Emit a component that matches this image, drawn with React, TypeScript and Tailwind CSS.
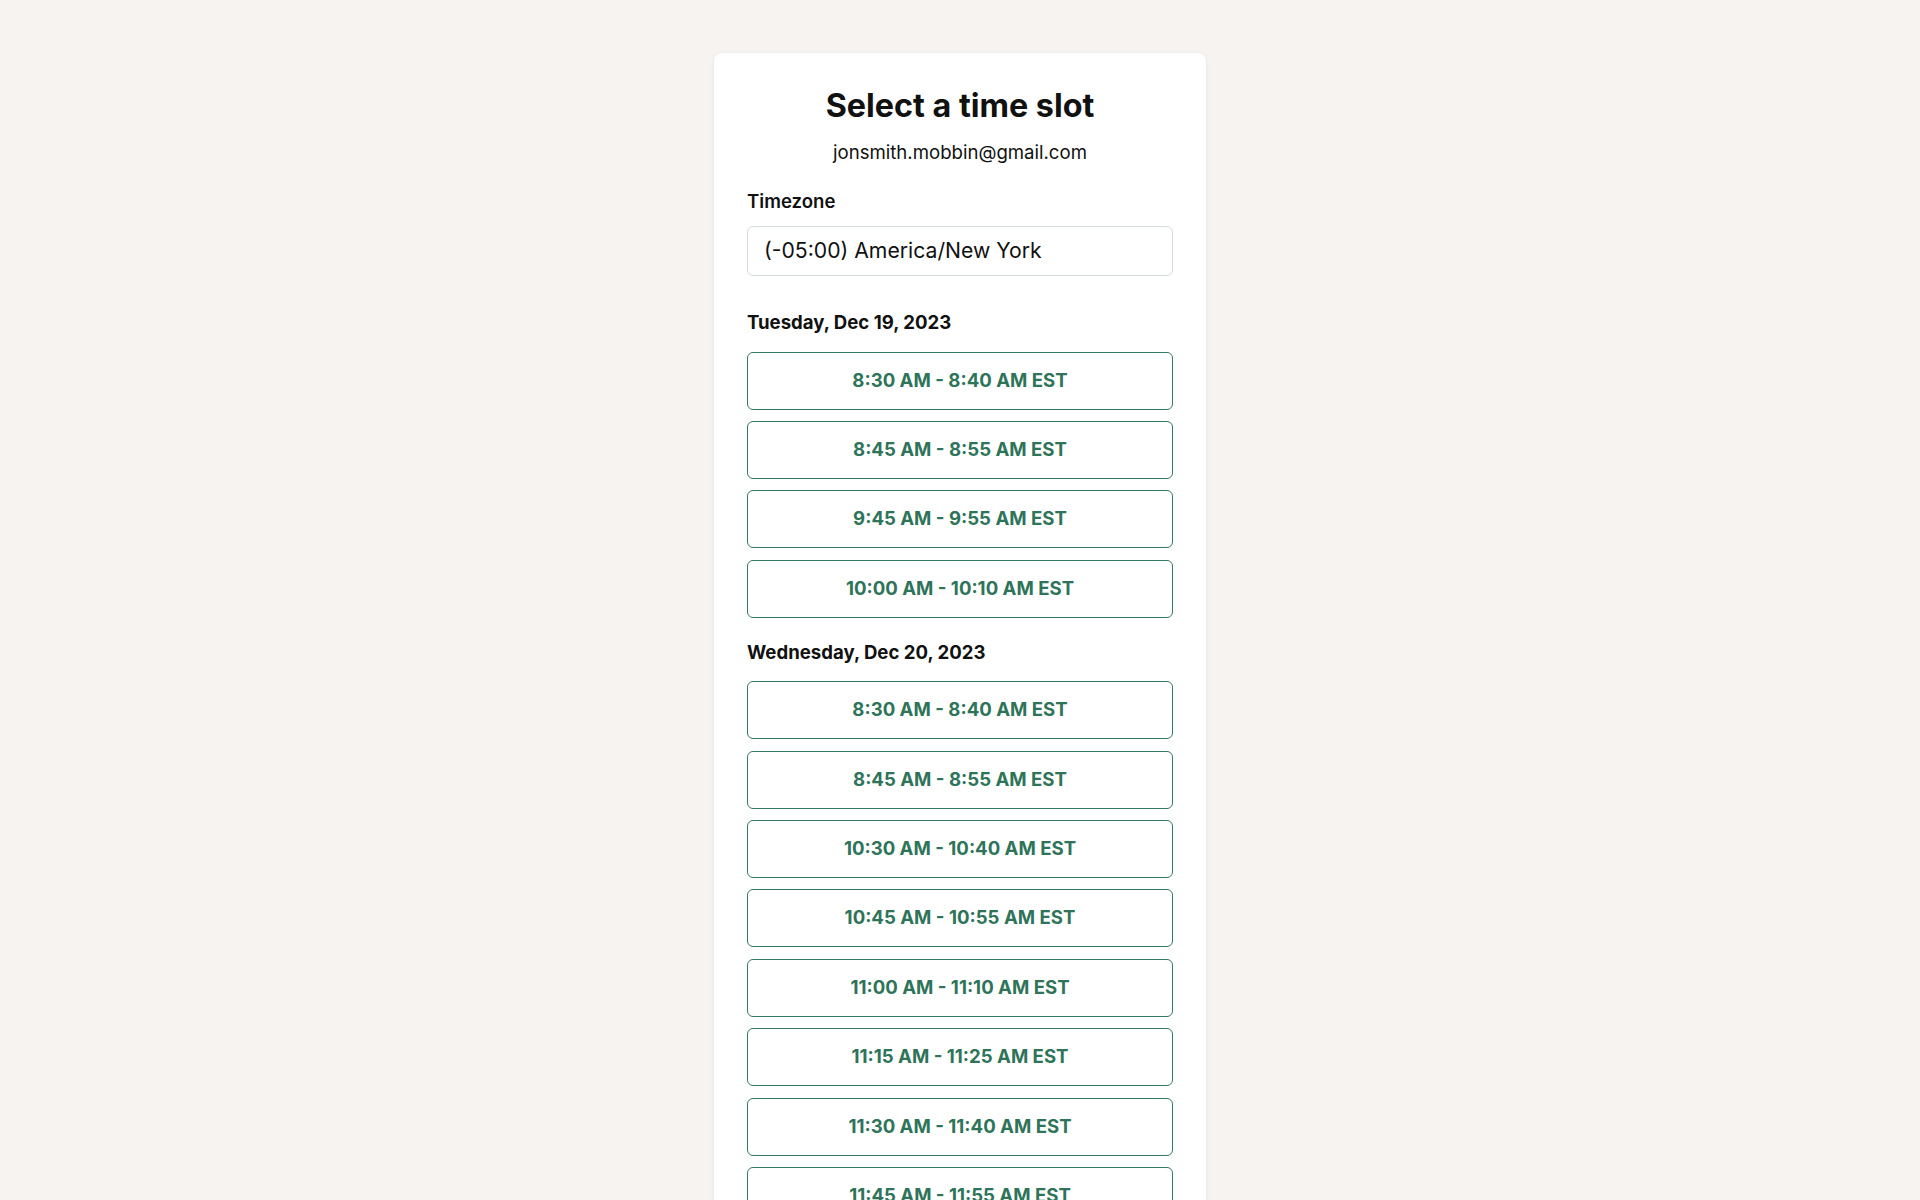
const days = [
  {
    label: "Tuesday, Dec 19, 2023",
    slots: [
      "8:30 AM - 8:40 AM EST",
      "8:45 AM - 8:55 AM EST",
      "9:45 AM - 9:55 AM EST",
      "10:00 AM - 10:10 AM EST",
    ],
  },
  {
    label: "Wednesday, Dec 20, 2023",
    slots: [
      "8:30 AM - 8:40 AM EST",
      "8:45 AM - 8:55 AM EST",
      "10:30 AM - 10:40 AM EST",
      "10:45 AM - 10:55 AM EST",
      "11:00 AM - 11:10 AM EST",
      "11:15 AM - 11:25 AM EST",
      "11:30 AM - 11:40 AM EST",
      "11:45 AM - 11:55 AM EST",
      "12:00 PM - 12:10 PM EST",
    ],
  },
];

export default function App() {
  return (
    <div className="min-h-screen bg-[#f6f3f0] pt-[53px] pb-16 font-['Inter',sans-serif] text-[#111]">
      <div className="mx-auto w-[492px] rounded-lg bg-white px-[33px] pt-[33px] pb-10 shadow-[0_1px_4px_rgba(0,0,0,0.08)]">
        <h1 className="text-center text-[32.3px] font-bold leading-10">Select a time slot</h1>
        <p className="mt-3 text-center text-[18.6px] leading-7">jonsmith.mobbin@gmail.com</p>

        <label className="mt-[21px] block text-[18.6px] font-semibold leading-7">Timezone</label>
        <div className="mt-[11px] flex h-[50px] items-center rounded-md border border-[#d6dbdb] px-4 text-[21.2px]">
          (-05:00) America/New York
        </div>

        <div className="mt-[34px] flex flex-col gap-[22px]">
          {days.map((day) => (
            <section key={day.label}>
              <h2 className="text-[18.6px] font-bold leading-6">{day.label}</h2>
              <div className="mt-[17.5px] flex flex-col gap-[11.4px]">
                {day.slots.map((slot) => (
                  <button
                    key={slot}
                    className="flex h-[58px] items-center justify-center rounded-md border-[1.5px] border-[#357a60] bg-white text-[18.6px] font-bold text-[#2e7459]"
                  >
                    {slot}
                  </button>
                ))}
              </div>
            </section>
          ))}
        </div>
      </div>
    </div>
  );
}
